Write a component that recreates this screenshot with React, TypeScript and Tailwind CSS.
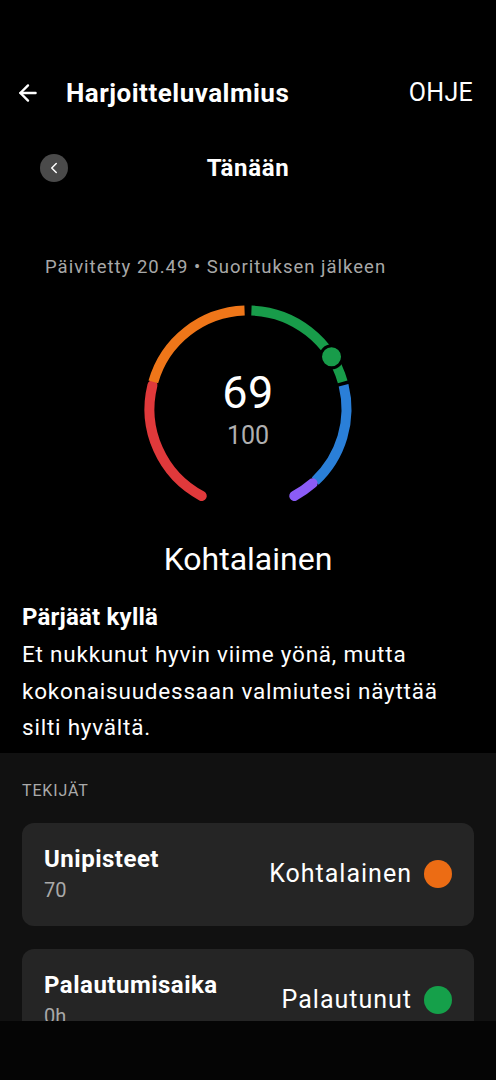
import { ArrowLeft, ChevronLeft } from "lucide-react";

const CX = 110;
const CY = 110;
const R = 98.5;

function pt(deg: number, r: number = R) {
  const a = (deg * Math.PI) / 180;
  return [CX + r * Math.sin(a), CY - r * Math.cos(a)];
}

function arc(from: number, to: number) {
  const [x1, y1] = pt(from);
  const [x2, y2] = pt(to);
  const large = to - from > 180 ? 1 : 0;
  return `M ${x1.toFixed(2)} ${y1.toFixed(2)} A ${R} ${R} 0 ${large} 1 ${x2.toFixed(2)} ${y2.toFixed(2)}`;
}

const segments = [
  { from: -152, to: -76, color: "#e0393b", cap: "round" as const },
  { from: -74, to: -2, color: "#ef7619", cap: "butt" as const },
  { from: 2, to: 74, color: "#189c4a", cap: "butt" as const },
  { from: 76, to: 137, color: "#2a7fd8", cap: "butt" as const },
  { from: 139, to: 152, color: "#8b5cf6", cap: "round" as const },
];

function Gauge() {
  const [dx, dy] = pt(58);
  return (
    <svg width="220" height="220" viewBox="0 0 220 220">
      {segments.map((s) => (
        <path
          key={s.from}
          d={arc(s.from, s.to)}
          stroke={s.color}
          strokeWidth="10"
          fill="none"
          strokeLinecap={s.cap}
        />
      ))}
      <circle cx={dx} cy={dy} r="11" fill="#189c4a" stroke="#000" strokeWidth="3" />
    </svg>
  );
}

function FactorCard({
  title,
  value,
  status,
  dot,
}: {
  title: string;
  value: string;
  status: string;
  dot: string;
}) {
  return (
    <div className="h-[103px] rounded-[12px] bg-[#252525] flex items-center justify-between pl-[22px] pr-[22px]">
      <div className="self-start pt-[22px] flex flex-col">
        <span className="text-[24px] leading-[28px] font-bold tracking-[0.5px] text-white">{title}</span>
        <span className="text-[20px] leading-[26px] mt-[4px] text-[#a9a9a9]">{value}</span>
      </div>
      <div className="flex items-center gap-[12px]">
        <span className="text-[25px] leading-[32px] tracking-[1px] text-white">{status}</span>
        <span className={`w-[28px] h-[28px] rounded-full ${dot}`} />
      </div>
    </div>
  );
}

export default function App() {
  return (
    <div className="w-[496px] h-[1080px] bg-black text-white overflow-hidden flex flex-col font-['Roboto',sans-serif]">
      <div className="mt-[65px] h-[56px] flex items-center pl-[15px] pr-[23px]">
        <ArrowLeft size={26} strokeWidth={2.2} className="text-white" />
        <span className="ml-[25px] text-[26px] font-bold tracking-[0.5px]">Harjoitteluvalmius</span>
        <span className="ml-auto text-[25px] tracking-[0.3px]">OHJE</span>
      </div>

      <div className="mt-[27px] h-[40px] relative flex items-center justify-center">
        <div className="absolute left-[40px] top-[6px] w-[28px] h-[28px] rounded-full bg-[#4a4a4a] flex items-center justify-center">
          <ChevronLeft size={18} strokeWidth={2} className="text-white -ml-[1px]" />
        </div>
        <span className="text-[24px] font-bold tracking-[0.7px]">Tänään</span>
      </div>

      <div className="mt-[67px] h-[24px] leading-[24px] pl-[45px] text-[18.5px] tracking-[1px] text-[#a8a8a8]">
        Päivitetty 20.49 • Suorituksen jälkeen
      </div>

      <div className="mt-[20px] h-[220px] relative flex justify-center">
        <Gauge />
        <div className="absolute inset-0 flex flex-col items-center">
          <span className="mt-[66px] text-[45px] leading-[56px] tracking-[0.5px]">69</span>
          <span className="text-[25px] leading-[30px] text-[#b0b0b0]">100</span>
        </div>
      </div>

      <div className="mt-[20px] h-[40px] leading-[40px] text-center text-[32px]">Kohtalainen</div>

      <div className="px-[22px] mt-[23px]">
        <div className="text-[24px] leading-[30px] font-bold tracking-[0.2px]">Pärjäät kyllä</div>
        <p className="mt-[4px] text-[22.5px] leading-[36.5px] tracking-[0.78px]">
          Et nukkunut hyvin viime yönä, mutta kokonaisuudessaan valmiutesi näyttää silti hyvältä.
        </p>
      </div>

      <div className="mt-[7px] h-[268px] bg-[#111111] px-[22px] overflow-hidden">
        <div className="mt-[28px] h-[20px] leading-[20px] text-[16px] tracking-[0.85px] text-[#aaaaaa]">TEKIJÄT</div>
        <div className="mt-[22px] flex flex-col gap-[23px]">
          <FactorCard title="Unipisteet" value="70" status="Kohtalainen" dot="bg-[#ec6c14]" />
          <FactorCard title="Palautumisaika" value="0h" status="Palautunut" dot="bg-[#15a04a]" />
        </div>
      </div>

      <div className="flex-1 bg-[#050505]" />
    </div>
  );
}
